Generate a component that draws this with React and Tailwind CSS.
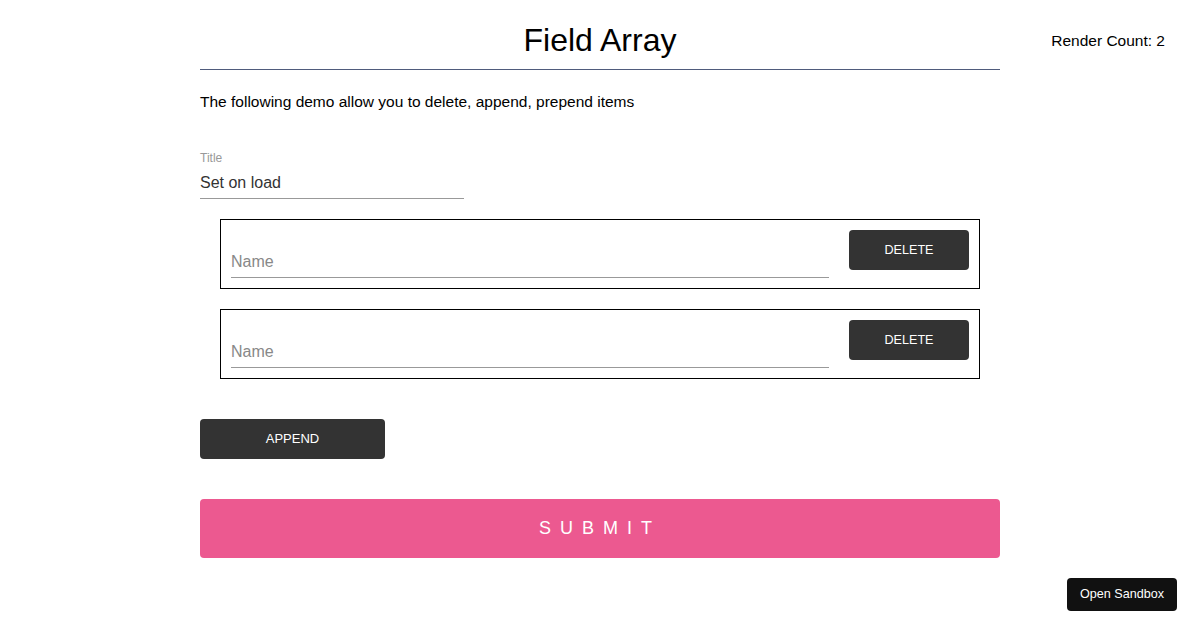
import React from "react";

function FieldItem() {
  return (
    <div className="mx-[20px] flex border border-black p-[10px]">
      <div className="flex-1 h-[48px] border-b border-[#999] pt-[20px]">
        <div className="leading-[24px] text-[16px] text-[#888]">Name</div>
      </div>
      <button className="ml-[20px] w-[120px] h-[40px] rounded-[4px] bg-[#333] text-white text-[12.6px] uppercase">
        Delete
      </button>
    </div>
  );
}

export default function App() {
  return (
    <div
      className="relative w-full h-[630px] bg-white text-black"
      style={{ fontFamily: '"Liberation Sans", Arial, sans-serif' }}
    >
      <div className="absolute right-[35px] top-[29px] text-[15.5px] leading-[24px]">
        Render Count: 2
      </div>
      <div className="w-[800px] mx-auto">
        <h1 className="pt-[22px] pb-[11px] text-[32px] leading-[36px] text-center border-b border-[#4f5b7c] font-normal">
          Field Array
        </h1>
        <p className="mt-[20px] text-[15.5px] leading-[24px]">
          The following demo allow you to delete, append, prepend items
        </p>
        <div className="mt-[36px] w-[264px]">
          <div className="text-[12px] leading-[16px] text-[#999]">Title</div>
          <div className="mt-[5px] pb-[3px] border-b border-[#999] text-[16px] leading-[24px] text-[#333]">
            Set on load
          </div>
        </div>
        <div className="mt-[20px] flex flex-col gap-[20px]">
          <FieldItem />
          <FieldItem />
        </div>
        <button className="mt-[40px] block w-[185px] h-[40px] rounded-[4px] bg-[#333] text-white text-[13px]">
          APPEND
        </button>
        <button className="mt-[40px] block w-full h-[59px] rounded-[4px] bg-[#ec5990] text-white text-[18px] tracking-[9px]">
          SUBMIT
        </button>
      </div>
      <button className="absolute right-[23px] bottom-[19px] h-[33px] px-[13px] rounded-[4px] bg-[#111] text-white text-[12.6px]">
        Open Sandbox
      </button>
    </div>
  );
}
